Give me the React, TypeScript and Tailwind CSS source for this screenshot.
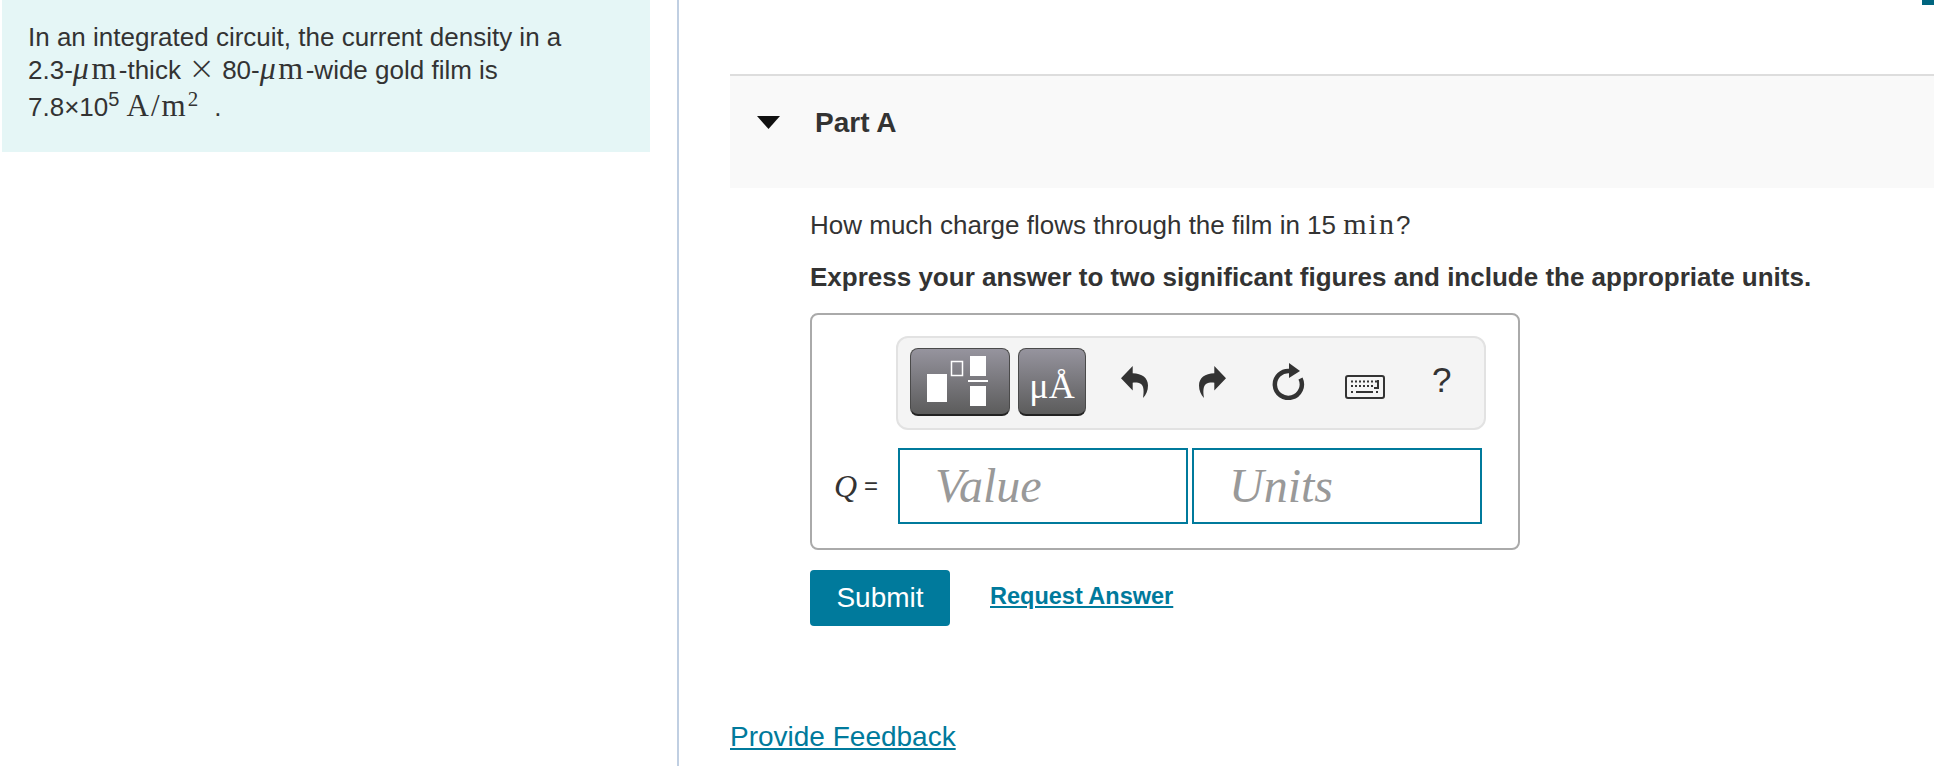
export default function App() {
  return (
    <div className="relative flex h-[766px] w-[1934px] overflow-hidden bg-white font-['Liberation_Sans',Arial,sans-serif] text-[#333]">
      <div className="absolute right-0 top-0 h-[5px] w-[12px] bg-[#00657f]" />
      <aside className="w-[677px] shrink-0 pl-[2px]">
        <div className="h-[152px] w-[648px] bg-[#e5f6f6] pl-[26px] pt-[21px] text-[26px] leading-[32px]">
          <p>In an integrated circuit, the current density in a</p>
          <p className="-mt-[1px] h-[32px]">
            2.3-<span className="font-['Liberation_Serif',serif] text-[32px] leading-none tracking-[2.5px] italic">μ</span>
            <span className="font-['Liberation_Serif',serif] text-[32px] leading-none tracking-[2.5px]">m</span>-thick{" "}
            <span className="font-['DejaVu_Sans',sans-serif] text-[32px] font-extralight leading-none">×</span> 80-
            <span className="font-['Liberation_Serif',serif] text-[32px] leading-none tracking-[2.5px] italic">μ</span>
            <span className="font-['Liberation_Serif',serif] text-[32px] leading-none tracking-[2.5px]">m</span>-wide gold film is
          </p>
          <p className="mt-[6px] h-[32px]">
            7.8×10<sup className="text-[20px] leading-none">5</sup>{" "}
            <span className="font-['Liberation_Serif',serif] text-[31px] leading-none tracking-[2px]">
              A/m<sup className="text-[21px] leading-none">2</sup>
            </span>
            <span className="ml-[14px]">.</span>
          </p>
        </div>
      </aside>

      <main className="min-w-0 flex-1 border-l-2 border-[#c0cfe2] pl-[51px] pt-[74px]">
        <header className="flex h-[114px] items-start border-t-2 border-[#dddddd] bg-[#f9f9f9] pt-[31px]">
          <svg className="ml-[27px] mt-[9px] h-[13px] w-[23px]" viewBox="0 0 23 13">
            <path d="M0 0H23L11.5 13Z" fill="#111" />
          </svg>
          <h2 className="ml-[35px] text-[28px] font-bold leading-[32px]">Part A</h2>
        </header>

        <section className="pl-[80px] pt-[21px]">
          <p className="h-[30px] text-[26px] leading-[30px]">
            How much charge flows through the film in 15 <span className="font-['Liberation_Serif',serif] text-[30px] leading-none tracking-[2px]">min</span>?
          </p>
          <p className="mt-[23px] text-[26px] font-bold leading-[30px]">
            Express your answer to two significant figures and include the appropriate units.
          </p>

          <div className="mt-[21px] w-[710px] rounded-[8px] border-2 border-[#aaaaaa] pb-[24px] pt-[21px]">
            <div className="ml-[84px] flex h-[94px] w-[590px] items-start rounded-[12px] border-2 border-[#e2e2e2] bg-[#f4f4f4] pl-[12px] pt-[10px]">
              <div className="flex h-[68px] w-[100px] shrink-0 items-center justify-center rounded-[8px] border border-b-2 border-[#4a4a4a] border-b-[#222] bg-linear-to-b from-[#96949e] to-[#5c5c5c]">
                <svg className="-translate-x-[2px]" width="62" height="52" viewBox="0 0 62 52">
                  <rect x="0" y="18" width="20" height="28" fill="#fff" />
                  <rect x="24.5" y="5.5" width="11" height="14" fill="none" stroke="#fff" strokeWidth="1.5" />
                  <rect x="43" y="0" width="16" height="20" fill="#fff" />
                  <rect x="41" y="24" width="20" height="2" fill="#fff" />
                  <rect x="43" y="30" width="16" height="20" fill="#fff" />
                </svg>
              </div>
              <div className="ml-[8px] flex h-[68px] w-[68px] shrink-0 items-end justify-center rounded-[8px] border border-b-2 border-[#4a4a4a] border-b-[#222] bg-linear-to-b from-[#96949e] to-[#5c5c5c] pb-[8px] font-['Liberation_Serif',serif] text-[36px] leading-[40px] text-white">
                μÅ
              </div>
              <svg className="ml-[35px] mt-[18px] shrink-0" width="28" height="32" viewBox="0 0 28 32">
                <path d="M0 12.3L11.7 0V7.3C21 7.5 27 12 27 19.5C27 24.5 25 29 22 32C23 26 23 20 20 18C17.5 16.5 14.5 16.4 11.7 16.7V24.5Z" fill="#333" />
              </svg>
              <svg className="ml-[49px] mt-[18px] shrink-0 -scale-x-100" width="28" height="32" viewBox="0 0 28 32">
                <path d="M0 12.3L11.7 0V7.3C21 7.5 27 12 27 19.5C27 24.5 25 29 22 32C23 26 23 20 20 18C17.5 16.5 14.5 16.4 11.7 16.7V24.5Z" fill="#333" />
              </svg>
              <svg className="ml-[46px] mt-[15px] shrink-0" width="33" height="37" viewBox="0 0 33 37">
                <path d="M18 8A13.5 13.5 0 1 0 28.5 15.5" fill="none" stroke="#333" strokeWidth="4.5" />
                <path d="M17 0L28 8L17 15Z" fill="#333" />
              </svg>
              <svg className="ml-[40px] mt-[27px] shrink-0" width="40" height="24" viewBox="0 0 40 24">
                <rect x="1" y="1" width="38" height="22" rx="2" fill="none" stroke="#333" strokeWidth="2" />
                <path d="M6 6.5H8M10 6.5H12M14 6.5H16M18 6.5H20M22 6.5H24M26 6.5H28M30 6.5H32M6 11H8M10 11H12M14 11H16M18 11H20M22 11H24M26 11H28M6 17H8M11 17H28M31 17H33" fill="none" stroke="#333" strokeWidth="2" />
                <path d="M33 5V13H29" fill="none" stroke="#333" strokeWidth="2" />
              </svg>
              <span className="ml-[47px] mt-[12px] text-[35px] leading-[40px] text-[#333]">?</span>
            </div>

            <div className="mt-[18px] flex items-center">
              <div className="flex w-[86px] items-center pl-[22px]">
                <span className="font-['Liberation_Serif',serif] text-[32px] italic leading-[36px]">Q</span>
                <span className="ml-[7px] text-[24px] leading-[36px]">=</span>
              </div>
              <div className="flex h-[76px] w-[290px] items-center border-2 border-[#007a9c] pl-[35px] font-['Liberation_Serif',serif] text-[48px] italic text-[#999]">
                Value
              </div>
              <div className="ml-[4px] flex h-[76px] w-[290px] items-center border-2 border-[#007a9c] pl-[35px] font-['Liberation_Serif',serif] text-[48px] italic text-[#999]">
                Units
              </div>
            </div>
          </div>

          <div className="mt-[20px] flex items-start">
            <button className="h-[56px] w-[140px] rounded-[4px] bg-[#007a9c] text-[28px] text-white">Submit</button>
            <a className="ml-[40px] mt-[12px] text-[23.5px] font-bold leading-[28px] text-[#007a9c] underline">Request Answer</a>
          </div>
        </section>

        <a className="mt-[95px] block w-fit text-[28px] leading-[32px] text-[#007a9c] underline">Provide Feedback</a>
      </main>
    </div>
  );
}
